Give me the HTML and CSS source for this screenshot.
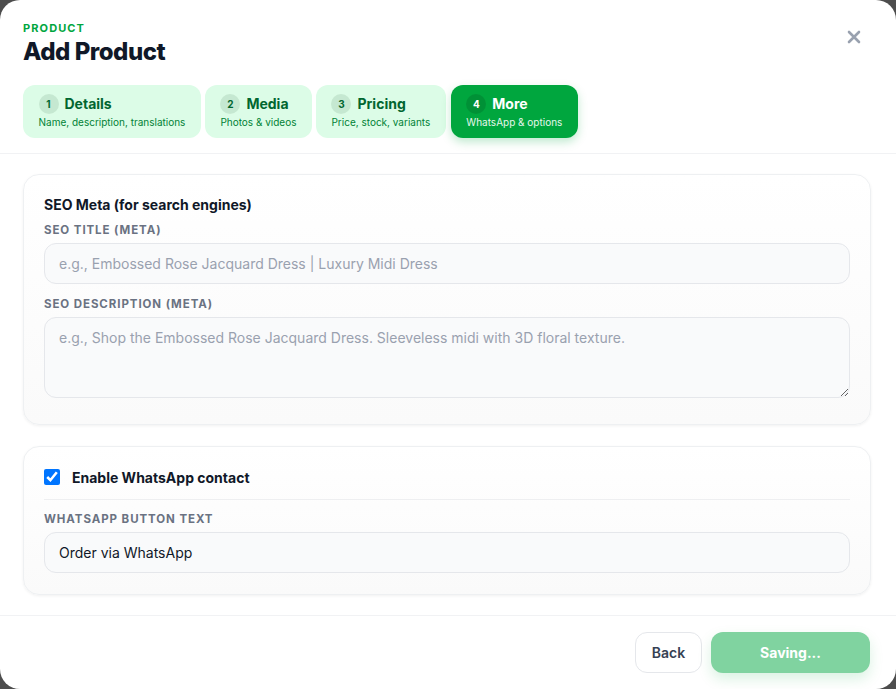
FILE: index.html
```html
<!DOCTYPE html>
<html>
<head>
<meta charset="utf-8">
<link rel="stylesheet" href="styles.css">
</head>
<body>
<div class="modal">
  <header class="header">
    <div class="eyebrow">PRODUCT</div>
    <h1 class="title">Add Product</h1>
    <button class="close" aria-label="Close">
      <svg width="14" height="14" viewBox="0 0 14 14"><path d="M2 2L12 12M12 2L2 12" stroke="#99a1af" stroke-width="2.6" stroke-linecap="round"/></svg>
    </button>
    <nav class="tabs">
      <div class="tab">
        <div class="tab-top"><span class="num">1</span><span class="tab-title">Details</span></div>
        <div class="tab-sub">Name, description, translations</div>
      </div>
      <div class="tab">
        <div class="tab-top"><span class="num">2</span><span class="tab-title">Media</span></div>
        <div class="tab-sub">Photos &amp; videos</div>
      </div>
      <div class="tab">
        <div class="tab-top"><span class="num">3</span><span class="tab-title">Pricing</span></div>
        <div class="tab-sub">Price, stock, variants</div>
      </div>
      <div class="tab active">
        <div class="tab-top"><span class="num">4</span><span class="tab-title">More</span></div>
        <div class="tab-sub">WhatsApp &amp; options</div>
      </div>
    </nav>
  </header>
  <main class="body">
    <section class="card">
      <h2 class="card-title">SEO Meta (for search engines)</h2>
      <label class="label first">SEO TITLE (META)</label>
      <input class="input" type="text" placeholder="e.g., Embossed Rose Jacquard Dress | Luxury Midi Dress">
      <label class="label">SEO DESCRIPTION (META)</label>
      <textarea class="input textarea" placeholder="e.g., Shop the Embossed Rose Jacquard Dress. Sleeveless midi with 3D floral texture."></textarea>
    </section>
    <section class="card">
      <label class="check-row"><input type="checkbox" class="check" checked><span>Enable WhatsApp contact</span></label>
      <div class="divider"></div>
      <label class="label">WHATSAPP BUTTON TEXT</label>
      <input class="input" type="text" value="Order via WhatsApp">
    </section>
  </main>
  <footer class="footer">
    <button class="btn back">Back</button>
    <button class="btn save">Saving...</button>
  </footer>
</div>
</body>
</html>
```
FILE: styles.css
```css
* { box-sizing: border-box; }
html, body { margin: 0; padding: 0; }
body {
  background: #4d4d4d;
  font-family: Inter, "Noto Sans", sans-serif;
  width: 896px;
  height: 689px;
  overflow: hidden;
}
.modal {
  width: 896px;
  height: 689px;
  background: #fff;
  border-radius: 20px;
  display: flex;
  flex-direction: column;
  overflow: hidden;
}
.header {
  position: relative;
  padding: 21px 23px 15px;
  border-bottom: 1px solid #f1f2f4;
}
.eyebrow {
  font-size: 11px;
  line-height: 14px;
  font-weight: 700;
  letter-spacing: 0.1em;
  color: #00a63e;
}
.title {
  margin: 1px 0 0;
  font-size: 24px;
  line-height: 32px;
  font-weight: 800;
  color: #101828;
  letter-spacing: -0.02em;
}
.close {
  position: absolute;
  top: 30px;
  right: 35px;
  border: 0;
  background: none;
  padding: 0;
  width: 14px;
  height: 14px;
  cursor: pointer;
}
.close svg { display: block; }
.tabs {
  display: flex;
  gap: 4px;
  margin-top: 17px;
}
.tab {
  background: #dcfce7;
  border-radius: 12px;
  padding: 9px 15.5px;
  color: #016630;
}
.tab-top {
  display: flex;
  align-items: center;
  gap: 6px;
  height: 20px;
}
.num {
  width: 20px;
  height: 20px;
  border-radius: 50%;
  background: rgba(0, 60, 20, 0.1);
  font-size: 10px;
  font-weight: 700;
  display: flex;
  align-items: center;
  justify-content: center;
  line-height: 1;
}
.tab-title {
  font-size: 14px;
  font-weight: 700;
  line-height: 20px;
}
.tab-sub {
  font-size: 10px;
  line-height: 14px;
  color: #008236;
  margin-top: 1px;
}
.tab.active {
  background: #00a63e;
  color: #fff;
  box-shadow: 0 4px 10px rgba(0, 166, 62, 0.25);
  margin-left: 1px;
}
.tab.active .num { background: rgba(0, 0, 0, 0.12); }
.tab.active .tab-sub { color: #e6f7ec; }

.body {
  flex: 1;
  overflow: hidden;
  padding: 20px 25px 20px 23px;
  display: flex;
  flex-direction: column;
  gap: 21px;
}
.card {
  border: 1px solid #eef0f2;
  border-radius: 16px;
  background: linear-gradient(180deg, #ffffff 0%, #fafafa 100%);
  box-shadow: 0 1px 3px rgba(0, 0, 0, 0.06);
  padding: 20px 20px 21px;
  display: flex;
  flex-direction: column;
}
.card-title {
  margin: 0;
  font-size: 14px;
  line-height: 20px;
  font-weight: 700;
  color: #101828;
}
.label {
  display: block;
  font-size: 11.5px;
  line-height: 14px;
  font-weight: 700;
  letter-spacing: 0.08em;
  color: #6a7282;
  margin-top: 13px;
  margin-bottom: 6px;
}
.label.first { margin-top: 8px; }
.input {
  display: block;
  width: 100%;
  height: 41px;
  border: 1px solid #e5e7eb;
  border-radius: 12px;
  background: #f9fafb;
  padding: 0 14px;
  font-family: Inter, "Noto Sans", sans-serif;
  font-size: 14px;
  color: #101828;
  outline: none;
}
.input::placeholder { color: #99a1af; }
.textarea {
  height: 81px;
  padding: 10px 14px;
  resize: vertical;
  margin-bottom: 5px;
  line-height: 20px;
}
.check-row {
  display: flex;
  align-items: center;
  gap: 12px;
  height: 20px;
  font-size: 14px;
  font-weight: 700;
  color: #101828;
}
.check {
  width: 16px;
  height: 16px;
  margin: 0;
  accent-color: #0075ff;
}
.divider {
  height: 1px;
  background: #eeeff1;
  margin-top: 12px;
}
.divider + .label { margin-top: 12px; }

.footer {
  border-top: 1px solid #f1f2f4;
  padding: 16px 26px 16px 23px;
  display: flex;
  justify-content: flex-end;
  gap: 9px;
}
.btn {
  height: 41px;
  border-radius: 12px;
  font-family: Inter, "Noto Sans", sans-serif;
  font-size: 14px;
  font-weight: 700;
  cursor: pointer;
}
.back {
  width: 67px;
  background: #fff;
  border: 1px solid #e5e7eb;
  color: #364153;
  font-weight: 600;
}
.save {
  width: 159px;
  border: 0;
  background: #80d3a0;
  color: #fff;
  box-shadow: 0 6px 14px rgba(0, 166, 62, 0.15);
}
```
